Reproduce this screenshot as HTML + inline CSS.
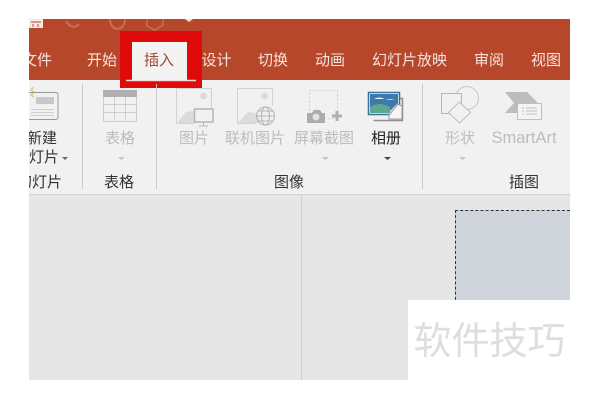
<!DOCTYPE html>
<html lang="zh">
<head>
<meta charset="utf-8">
<style>
html,body{margin:0;padding:0;background:#fff}
#r{position:relative;width:600px;height:400px;overflow:hidden;background:#fff;font-family:"Liberation Sans","Noto Sans CJK SC",sans-serif}
#a{position:absolute;left:29px;top:19px;width:541px;height:361px;background:#e6e6e6;overflow:hidden}
.b{position:absolute}
.t{position:absolute;white-space:nowrap;font-size:15px;line-height:18px;transform:translateX(-50%)}
.w{color:#f6e4de}
.g{color:#bdbdbd}
.k{color:#333}
svg{position:absolute;left:0;top:0}
</style>
</head>
<body>
<div id="r">
<div id="a"></div>
<div class="b" style="left:29px;top:19px;width:541px;height:61px;background:#b7472a"></div>
<div class="b" style="left:29px;top:80px;width:541px;height:114px;background:#f1f1f1"></div>
<div class="b" style="left:29px;top:194px;width:541px;height:1px;background:#d2d2d2"></div>
<div class="b" style="left:301px;top:195px;width:1px;height:185px;background:#cfcfcf"></div>
<div class="b" style="left:455px;top:210px;width:115px;height:100px;background:#d0d4db;border-top:1px dashed #333;border-left:1px dashed #333;box-sizing:border-box"></div>

<svg width="600" height="400" viewBox="0 0 600 400" fill="none">
<path d="M29 19h14v9H29z" fill="#f5e9e5"/><path d="M31 22h10M33 24v3M38 24v3" stroke="#b7472a"/>
<path d="M66 21c4 7 10 7 13 3" stroke="#c86f55" stroke-width="2"/>
<path d="M110 19c0 13 15 13 15 0" stroke="#c86f55" stroke-width="2"/>
<path d="M147 19v7l8 4 8-5v-6" stroke="#c86f55" stroke-width="1.500"/>
<path d="M185 19h8l-4 3z" fill="#f3ddd6"/>

<rect x="120" y="31" width="82" height="57" fill="#e00a0a"/>
<rect x="132" y="42" width="55" height="38" fill="#f3f3f3"/>
<path d="M126 80.500h70" stroke="#f3ddd6" stroke-width="1.500"/>

<g stroke="#c9c9c9">
<path d="M82.500 84v105M156.500 84v105M422.500 84v105"/>
</g>

<!-- new slide -->
<path d="M34 87l-3 3 3 2-3 3 3 2" stroke="#e5c97a" stroke-width="1.500"/>
<path d="M29 92.500h27a2 2 0 0 1 2 2v23a2 2 0 0 1-2 2H29" stroke="#9a9a9a"/>
<rect x="36" y="97" width="18" height="7" fill="#c8c8c8"/>
<path d="M31 109.500h23M31 112.500h23M31 115.500h23" stroke="#cfcfcf"/>

<!-- table -->
<rect x="103" y="90" width="34" height="7" fill="#b0b0b0"/>
<path d="M103.500 97v24.500h33V97M103 104.500h34M103 112.500h34M114.500 97v24M125.500 97v24" stroke="#cdcdcd"/>
<path d="M118 157h7l-3.500 3z" fill="#c4c4c4"/>

<!-- picture -->
<path d="M176.500 123.500v-35h35v20M176.500 123.500h18" stroke="#d2d2d2"/>
<circle cx="203.500" cy="96" r="3.500" fill="#dadada"/>
<path d="M177 123l9-11 7-1 2 1v11z" fill="#dcdcdc"/>
<rect x="194.500" y="109" width="18.500" height="13" stroke="#b4b4b4" stroke-width="1.500"/>
<path d="M203.500 123v3M199 126h9" stroke="#b4b4b4"/>

<!-- online picture -->
<path d="M237.500 123.500v-35h35v17M237.500 123.500h18" stroke="#d2d2d2"/>
<circle cx="264.500" cy="96" r="3.500" fill="#dadada"/>
<path d="M238 123l10-11 8 1 3 3v7z" fill="#dcdcdc"/>
<circle cx="265.500" cy="116" r="9" stroke="#b4b4b4"/>
<ellipse cx="265.500" cy="116" rx="4" ry="9" stroke="#b4b4b4"/>
<path d="M256.500 116h18M258 111h15M258 121h15" stroke="#b4b4b4"/>

<!-- screenshot -->
<rect x="309.500" y="90.500" width="28" height="28" stroke="#cfcfcf" stroke-dasharray="2 2"/>
<path d="M307 113h5l2-3h6l2 3h3v10h-18z" fill="#ababab"/>
<circle cx="316" cy="117" r="3.500" fill="#e2e2e2"/>
<path d="M337 111v10M332 116h10" stroke="#b0b0b0" stroke-width="3"/>
<path d="M322 157h7l-3.500 3z" fill="#c4c4c4"/>

<!-- album -->
<path d="M373.500 120.500h29v-22h-4" stroke="#8f8f8f" stroke-width="1.500"/>
<rect x="368.500" y="92.500" width="31" height="22" fill="#f4f4f4" stroke="#3a6f9f" stroke-width="1.500"/>
<path d="M370 94h28v9l-8 8h-20z" fill="#3c79ac"/>
<path d="M370 107c6-4 12-4 20 0v6h-20z" fill="#5ea98c"/>
<path d="M374 99c3-2 8-2 10 0zM386 100c2-1 6-1 8 0z" fill="#eef4f7"/>
<path d="M389 115l9-11 4 2v13h-13z" fill="#f6f6f6" stroke="#999"/>
<path d="M384 157h7l-3.500 3z" fill="#444"/>

<!-- shapes -->
<circle cx="467" cy="98" r="11.500" stroke="#c8c8c8"/>
<rect x="441.500" y="93.500" width="20" height="20" fill="#f1f1f1" stroke="#b5b5b5"/>
<path d="M459.500 102l11 10.500-11 10.500-11-10.500z" fill="#f1f1f1" stroke="#c0c0c0"/>
<path d="M459 157h7l-3.500 3z" fill="#c4c4c4"/>

<!-- smartart -->
<path d="M505 92h22l11 11h-21v10h-12l9-10z" fill="#bdbdbd"/>
<rect x="517.500" y="103.500" width="24" height="16" fill="#f4f4f4" stroke="#c0c0c0"/>
<path d="M522 108h2M522 111h2M522 114h2M526 108h11M526 111h11M526 114h11" stroke="#c0c0c0"/>
</svg>

<!-- tabs -->
<div class="t w" style="left:37px;top:52px">文件</div>
<div class="t w" style="left:102px;top:52px">开始</div>
<div class="t" style="left:159px;top:52px;color:#9e4a38">插入</div>
<div class="t w" style="left:216.500px;top:52px">设计</div>
<div class="t w" style="left:273px;top:52px">切换</div>
<div class="t w" style="left:330px;top:52px">动画</div>
<div class="t w" style="left:409.500px;top:52px">幻灯片放映</div>
<div class="t w" style="left:489px;top:52px">审阅</div>
<div class="t w" style="left:546px;top:52px">视图</div>
<div class="b" style="left:0;top:40px;width:29px;height:40px;background:#fff"></div>

<!-- ribbon labels -->
<div class="t k" style="left:42px;top:130px">新建</div>
<div class="t k" style="left:44px;top:149px">灯片</div>
<div class="b" style="left:62px;top:157px;width:0;height:0;border:3.500px solid transparent;border-top-color:#666"></div>
<div class="t k" style="left:39.500px;top:174px">幻灯片</div>
<div class="b" style="left:0;top:100px;width:29px;height:100px;background:#fff"></div>
<div class="t g" style="left:120px;top:130px">表格</div>
<div class="t k" style="left:119px;top:174px">表格</div>
<div class="t g" style="left:194px;top:130px">图片</div>
<div class="t g" style="left:255px;top:130px">联机图片</div>
<div class="t g" style="left:324px;top:130px">屏幕截图</div>
<div class="t" style="left:386px;top:130px;color:#222">相册</div>
<div class="t k" style="left:289px;top:174px">图像</div>
<div class="t g" style="left:460px;top:130px">形状</div>
<div class="t g" style="left:524px;top:129px;font-size:16.500px">SmartArt</div>
<div class="t k" style="left:524px;top:174px">插图</div>

<!-- cover and watermark -->
<div class="b" style="left:570px;top:0;width:30px;height:400px;background:#fff"></div>
<div class="b" style="left:408px;top:300px;width:192px;height:100px;background:#fff"></div>
<div class="t" style="left:489.500px;top:319px;font-size:38px;line-height:46px;color:#dedede">软件技巧</div>
</div>
</body>
</html>
